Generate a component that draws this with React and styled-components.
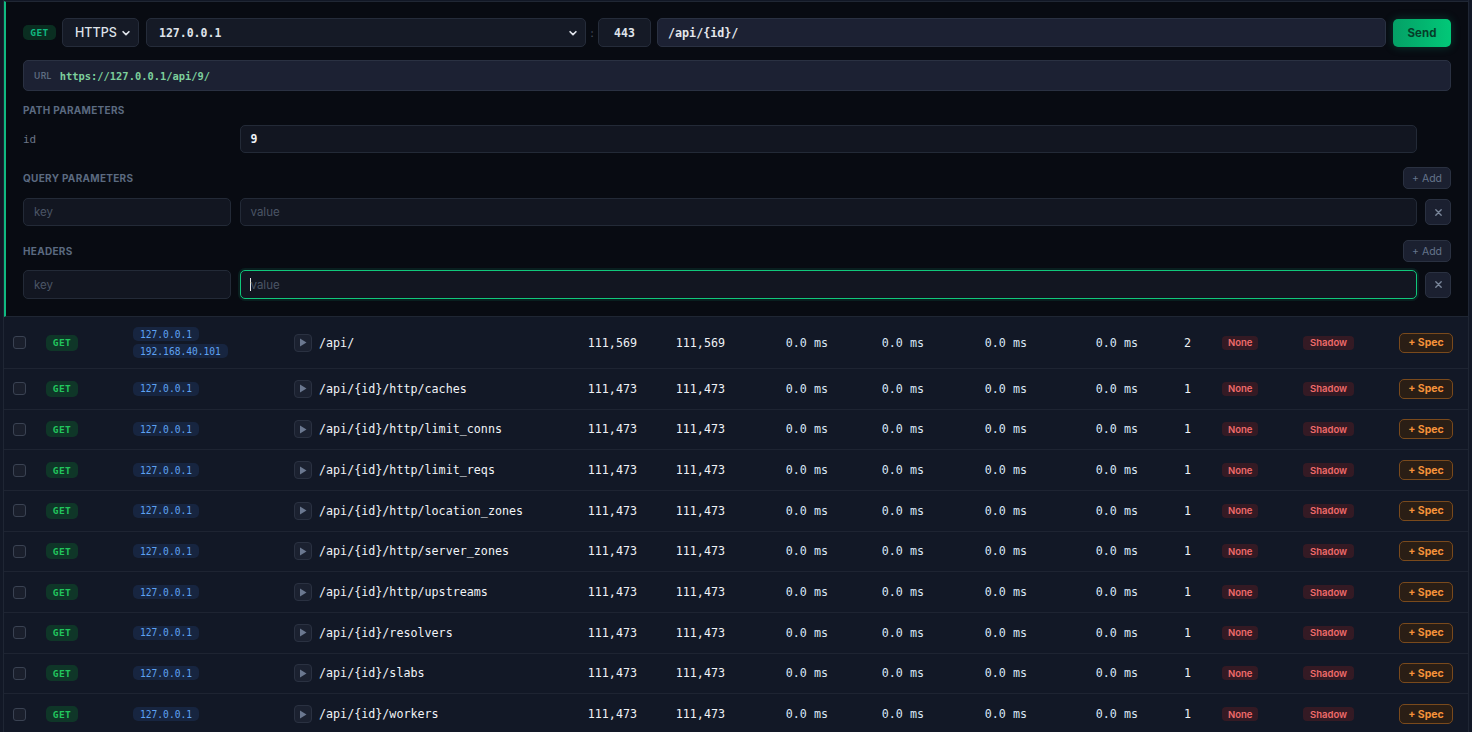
import React from "react";
import styled, { createGlobalStyle } from "styled-components";

const GlobalStyle = createGlobalStyle`
  * { box-sizing: border-box; }
  body {
    margin: 0;
    background: #121826;
    font-family: Inter, "Noto Sans", sans-serif;
    color: #e5e7eb;
  }
`;

const MONO = `"DejaVu Sans Mono", "Liberation Mono", monospace`;

const Frame = styled.div`
  margin: 0 3px;
  padding-top: 1px;
  border-left: 1px solid #1f2634;
  border-right: 1px solid #1f2634;
  min-height: 732px;
`;

const Panel = styled.section`
  background: #080b12;
  border-top: 1px solid #202734;
  border-bottom: 1px solid #1f2633;
  border-left: 2px solid #10b981;
  padding: 16px 17px 17px 17px;
`;

const RequestBar = styled.div`
  display: flex;
  align-items: center;
  height: 29px;
`;

const MethodTag = styled.span`
  font-family: ${MONO};
  font-weight: 700;
  font-size: 9.5px;
  color: ${p => p.$color || "#10b981"};
  background: ${p => p.$bg || "#0a2e21"};
  border-radius: 5px;
  width: ${p => p.$w || 33}px;
  height: ${p => p.$h || 15}px;
  display: inline-flex;
  align-items: center;
  justify-content: center;
  letter-spacing: 0.4px;
  flex-shrink: 0;
`;

const SelectBox = styled.div`
  margin-left: ${p => p.$ml || 0}px;
  width: ${p => p.$w}px;
  height: 29px;
  background: #151a26;
  border: 1px solid #252c3a;
  border-radius: 5px;
  display: flex;
  align-items: center;
  justify-content: space-between;
  padding: 0 7px 0 ${p => p.$pl || 12}px;
  font-family: ${p => (p.$mono ? MONO : "Inter, sans-serif")};
  font-size: ${p => (p.$mono ? "11.5px" : "12.5px")};
  font-weight: ${p => (p.$mono ? 700 : 500)};
  color: #dfe3ea;
  flex-shrink: 0;
`;

const Colon = styled.span`
  width: 12px;
  text-align: center;
  color: #4b5563;
  font-size: 11px;
`;

const PortBox = styled.div`
  width: 53px;
  height: 29px;
  background: #151a26;
  border: 1px solid #252c3a;
  border-radius: 5px;
  display: flex;
  align-items: center;
  justify-content: center;
  font-family: ${MONO};
  font-size: 11.5px;
  font-weight: 700;
  color: #dfe3ea;
`;

const PathBox = styled.div`
  flex: 1;
  margin: 0 7px 0 6px;
  height: 29px;
  background: #1c2133;
  border: 1px solid #2a3142;
  border-radius: 5px;
  display: flex;
  align-items: center;
  padding-left: 10px;
  font-family: ${MONO};
  font-size: 11.7px;
  font-weight: 700;
  color: #e5e7eb;
`;

const SendButton = styled.button`
  width: 58px;
  height: 28px;
  border: none;
  border-radius: 5px;
  background: linear-gradient(90deg, #04a066, #02c878);
  box-shadow: 0 0 10px rgba(16, 185, 129, 0.25);
  color: #063d29;
  font-family: Inter, sans-serif;
  font-weight: 700;
  font-size: 11.5px;
`;

const UrlBar = styled.div`
  margin-top: 13px;
  height: 31px;
  background: #1c2133;
  border: 1px solid #2a3142;
  border-radius: 5px;
  display: flex;
  align-items: center;
  padding-left: 10px;
  gap: 8px;
`;

const UrlLabel = styled.span`
  font-family: Inter, sans-serif;
  font-size: 8.5px;
  font-weight: 600;
  color: #5d6b80;
  letter-spacing: 0.4px;
`;

const UrlText = styled.span`
  font-family: ${MONO};
  font-size: 10.4px;
  font-weight: 700;
  color: #7dcf9c;
`;

const Section = styled.div`
  margin-top: ${p => p.$mt || 14}px;
`;

const SectionHead = styled.div`
  display: flex;
  align-items: center;
  justify-content: space-between;
  min-height: ${p => (p.$tall ? 22 : 14)}px;
  margin-bottom: ${p => p.$mb || 8}px;
`;

const SectionTitle = styled.span`
  font-family: Inter, sans-serif;
  font-size: 10px;
  font-weight: 700;
  color: #5b6a80;
  letter-spacing: 0.3px;
  text-transform: uppercase;
`;

const SmallButton = styled.button`
  width: ${p => p.$w || 48}px;
  height: ${p => p.$h || 22}px;
  background: #1b2030;
  border: 1px solid #2a3141;
  border-radius: 5px;
  color: #64748b;
  font-family: Inter, sans-serif;
  font-size: 10.5px;
  padding: 0;
  display: flex;
  align-items: center;
  justify-content: center;
  gap: 3px;
`;

const ParamRow = styled.div`
  display: grid;
  grid-template-columns: 208px 1177px 26px;
  column-gap: 8.5px;
  align-items: center;
  height: ${p => p.$h || 28}px;
`;

const ParamName = styled.span`
  font-family: ${MONO};
  font-size: 11px;
  color: #6b7587;
`;

const Field = styled.div`
  height: ${p => p.$h || 28}px;
  background: #121621;
  border: 1px solid ${p => (p.$focus ? "#10c77b" : "#232a37")};
  box-shadow: ${p => (p.$focus ? "0 0 0 2px rgba(16, 185, 129, 0.12)" : "none")};
  border-radius: 5px;
  display: flex;
  align-items: center;
  padding-left: ${p => (p.$focus ? 9 : 10)}px;
  font-family: ${p => (p.$mono ? MONO : "Inter, sans-serif")};
  font-size: 11.5px;
  font-weight: ${p => (p.$mono ? 700 : 400)};
  color: ${p => (p.$placeholder ? "#4b5565" : "#eef1f5")};
`;

const Caret = styled.span`
  width: 1px;
  height: 13px;
  background: #e5e7eb;
`;

const Table = styled.div``;

const Row = styled.div`
  display: grid;
  grid-template-columns: 33px 87px 161px 275px 86px 88px 103px 96px 103px 111px 66px 81px 96px 78px;
  align-items: center;
  min-height: 40.67px;
  padding: ${p => (p.$tall ? "10px 0" : "0")};
  border-bottom: 1px solid #1e2432;
  background: #121826;
`;

const Cell = styled.div`
  padding: 0 ${p => p.$pr || 9}px 0 9px;
  display: flex;
  justify-content: ${p => (p.$right ? "flex-end" : "flex-start")};
  align-items: center;
  font-family: ${MONO};
  font-size: 11.7px;
  color: ${p => p.$color || "#eef1f5"};
  white-space: nowrap;
`;

const Check = styled.span`
  width: 13px;
  height: 13px;
  border: 1px solid #3a4252;
  background: #1a1f2c;
  border-radius: 3px;
`;

const HostStack = styled.div`
  display: flex;
  flex-direction: column;
  align-items: flex-start;
  gap: 3px;
`;

const HostPill = styled.span`
  font-family: ${MONO};
  font-size: 9.6px;
  color: #5ea2f2;
  background: #172540;
  border-radius: 5px;
  height: 14px;
  padding: 0 7px;
  display: inline-flex;
  align-items: center;
`;

const PlayButton = styled.span`
  width: 18px;
  height: 18px;
  border: 1px solid #2a3141;
  background: #1b2130;
  border-radius: 4px;
  display: inline-flex;
  align-items: center;
  justify-content: center;
  margin-right: 7px;
  flex-shrink: 0;
`;

const PathName = styled.span`
  font-family: ${MONO};
  font-size: 11.7px;
  font-weight: 400;
  color: #f1f4f8;
`;

const Tag = styled.span`
  font-family: Inter, sans-serif;
  font-size: 9.5px;
  font-weight: 600;
  color: #f06b6b;
  background: #341a24;
  border-radius: 4px;
  height: 14px;
  padding: 0 ${p => p.$px || 6}px;
  display: inline-flex;
  align-items: center;
`;

const SpecButton = styled.span`
  width: 54px;
  height: 20px;
  border: 1px solid #7a4a1c;
  background: #2a1e15;
  border-radius: 5px;
  color: #f5923a;
  font-family: Inter, sans-serif;
  font-size: 10.5px;
  font-weight: 700;
  display: inline-flex;
  align-items: center;
  justify-content: center;
`;

const Chevron = () => (
  <svg width="10" height="10" viewBox="0 0 24 24" fill="none" stroke="#dfe3ea" strokeWidth="4" strokeLinecap="round" strokeLinejoin="round">
    <path d="M5 9l7 7 7-7" />
  </svg>
);

const Triangle = () => (
  <svg width="8" height="9" viewBox="0 0 8 9">
    <path d="M1 0.5 L7.5 4.5 L1 8.5 Z" fill="#6b7890" />
  </svg>
);

const Close = () => (
  <svg width="9" height="9" viewBox="0 0 10 10" stroke="#7a869a" strokeWidth="1.5" strokeLinecap="round">
    <path d="M2 2l6 6M8 2l-6 6" />
  </svg>
);

const endpoints = [
  { path: "/api/", hosts: ["127.0.0.1", "192.168.40.101"], n: "111,569", count: 2 },
  { path: "/api/{id}/http/caches" },
  { path: "/api/{id}/http/limit_conns" },
  { path: "/api/{id}/http/limit_reqs" },
  { path: "/api/{id}/http/location_zones" },
  { path: "/api/{id}/http/server_zones" },
  { path: "/api/{id}/http/upstreams" },
  { path: "/api/{id}/resolvers" },
  { path: "/api/{id}/slabs" },
  { path: "/api/{id}/workers" },
];

const EndpointRow = ({ ep }) => {
  const hosts = ep.hosts || ["127.0.0.1"];
  const n = ep.n || "111,473";
  return (
    <Row $tall={hosts.length > 1}>
      <Cell><Check /></Cell>
      <Cell>
        <MethodTag $bg="#0f3628" $color="#22c55e" $w={32} $h={16}>GET</MethodTag>
      </Cell>
      <Cell>
        <HostStack>
          {hosts.map(h => <HostPill key={h}>{h}</HostPill>)}
        </HostStack>
      </Cell>
      <Cell>
        <PlayButton><Triangle /></PlayButton>
        <PathName>{ep.path}</PathName>
      </Cell>
      <Cell $right>{n}</Cell>
      <Cell $right>{n}</Cell>
      {[0, 1, 2, 3].map(i => (
        <Cell key={i} $right $color="#d9e6f7">0.0 ms</Cell>
      ))}
      <Cell $right $pr={22}>{ep.count || 1}</Cell>
      <Cell><Tag>None</Tag></Cell>
      <Cell><Tag $px={7}>Shadow</Tag></Cell>
      <Cell><SpecButton>+ Spec</SpecButton></Cell>
    </Row>
  );
};

export default function App() {
  return (
    <>
      <GlobalStyle />
      <Frame>
        <Panel>
          <RequestBar>
            <MethodTag>GET</MethodTag>
            <SelectBox $w={77} $ml={6} $pl={12}>
              HTTPS <Chevron />
            </SelectBox>
            <SelectBox $w={440} $ml={7} $mono>
              127.0.0.1 <Chevron />
            </SelectBox>
            <Colon>:</Colon>
            <PortBox>443</PortBox>
            <PathBox>/api/{"{id}"}/</PathBox>
            <SendButton>Send</SendButton>
          </RequestBar>

          <UrlBar>
            <UrlLabel>URL</UrlLabel>
            <UrlText>https://127.0.0.1/api/9/</UrlText>
          </UrlBar>

          <Section $mt={12}>
            <SectionHead>
              <SectionTitle>Path Parameters</SectionTitle>
            </SectionHead>
            <ParamRow>
              <ParamName>id</ParamName>
              <Field $mono>9</Field>
            </ParamRow>
          </Section>

          <Section>
            <SectionHead $tall $mb={9}>
              <SectionTitle>Query Parameters</SectionTitle>
              <SmallButton>+ Add</SmallButton>
            </SectionHead>
            <ParamRow>
              <Field $placeholder>key</Field>
              <Field $placeholder>value</Field>
              <SmallButton $w={26} $h={26}><Close /></SmallButton>
            </ParamRow>
          </Section>

          <Section>
            <SectionHead $tall>
              <SectionTitle>Headers</SectionTitle>
              <SmallButton>+ Add</SmallButton>
            </SectionHead>
            <ParamRow $h={29}>
              <Field $placeholder $h={29}>key</Field>
              <Field $placeholder $focus $h={29}>
                <Caret />value
              </Field>
              <SmallButton $w={26} $h={26}><Close /></SmallButton>
            </ParamRow>
          </Section>
        </Panel>

        <Table>
          {endpoints.map(ep => (
            <EndpointRow key={ep.path} ep={ep} />
          ))}
        </Table>
      </Frame>
    </>
  );
}
